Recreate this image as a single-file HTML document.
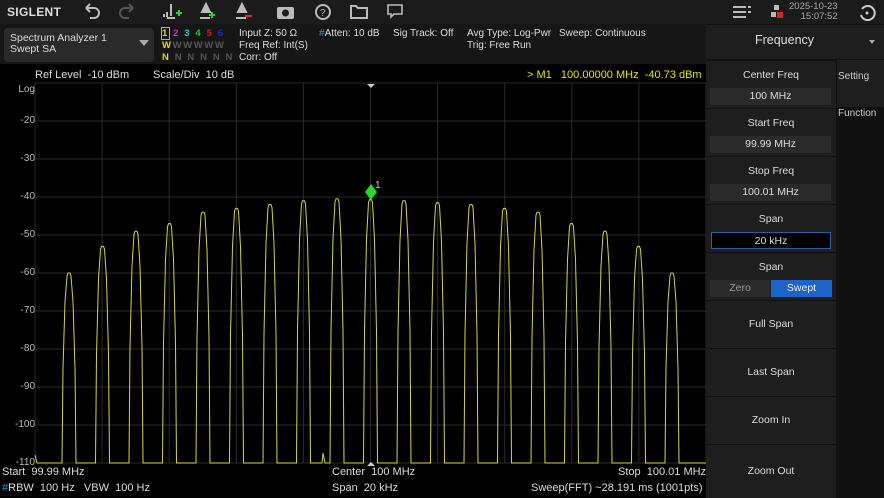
<!DOCTYPE html>
<html><head><meta charset="utf-8"><style>
*{margin:0;padding:0;box-sizing:border-box}
body{width:884px;height:498px;background:#000;font-family:"Liberation Sans",sans-serif;color:#ddd;position:relative;overflow:hidden;font-size:10px}
.a{position:absolute;white-space:nowrap}
.top{left:0;top:0;width:884px;height:24px;background:#1b1b1b}
.info{left:0;top:24px;width:706px;height:40px;background:#161616}
.rp{left:706px;top:24px;width:178px;height:474px;background:#111}
.btn{position:absolute;left:706px;width:130px;height:47px;background:#1e1e1e;text-align:center;color:#ddd;font-size:10.5px}
.val{position:absolute;left:4px;width:121px;height:17px;top:27px;background:#2a2a2a;line-height:17px}
.y{position:absolute;right:849px;color:#bbb;font-size:10px}
.yl{color:#e6e600}
.b{font-size:11px}
</style></head><body>
<div class="a top"></div>
<div class="a" style="left:7px;top:5px;font-weight:bold;font-size:12px;color:#ddd;letter-spacing:.3px">SIGLENT</div>
<svg class="a" style="left:80px;top:0" width="340" height="24" fill="none" stroke="#bbb" stroke-width="2">
<path d="M6 8 h8 a5 5 0 0 1 0 10 h-4 M6 8 l4-4 M6 8 l4 4"/>
<path d="M53 8 h-8 a5 5 0 0 0 0 10 h4 M53 8 l-4-4 M53 8 l-4 4" stroke="#555"/>
<path d="M91 4 v12 M87 18 h8 M84 17 v-3 M87 17 v-5" stroke="#bbb"/><path d="M96 13 h6 M99 10 v6" stroke="#3c3"/>
<path d="M126 4 l-4 8 h8 z M120 18 h10" fill="#bbb"/><path d="M129 15 h6 M132 12 v6" stroke="#3c3"/>
<path d="M162 4 l-4 8 h8 z M156 18 h10" fill="#bbb"/><path d="M165 16 h7" stroke="#d33"/>
<rect x="197" y="7" width="17" height="12" rx="2" fill="#bbb" stroke="none"/><circle cx="205.5" cy="13" r="3.5" fill="#1b1b1b" stroke="none"/>
<circle cx="243" cy="12" r="7"/><text x="240" y="16" fill="#bbb" stroke="none" font-size="10" font-family="Liberation Sans">?</text>
<path d="M271 6 h5 l2 2 h9 v10 h-16 z"/>
<path d="M308 5 h14 v9 h-8 l-3 3 v-3 h-3 z" stroke-width="1.6"/>
</svg>
<svg class="a" style="left:733px;top:5px" width="20" height="14" fill="#bbb"><rect x="0" y="1" width="13" height="2"/><rect x="0" y="6" width="13" height="2"/><rect x="0" y="11" width="13" height="2"/><rect x="15" y="1" width="3" height="2"/><rect x="15" y="6" width="3" height="2"/></svg>
<svg class="a" style="left:771px;top:5px" width="12" height="14"><rect x="3" y="0" width="5" height="5" fill="#bbb"/><rect x="0" y="7" width="5" height="5" fill="#bbb"/><rect x="6" y="7" width="6" height="6" fill="#d22"/></svg>
<div class="a" style="left:789px;top:2px;font-size:9.5px;color:#aaa;line-height:10px;text-align:right">2025-10-23<br>15:07:52</div>
<svg class="a" style="left:858px;top:4px" width="18" height="17" fill="none" stroke="#ccc" stroke-width="2"><path d="M4 5 a7 7 0 1 1 -1 6"/><circle cx="9" cy="9" r="1.5" fill="#ccc" stroke="none"/></svg>

<div class="a info"></div>
<div class="a" style="left:4px;top:28px;width:150px;height:34px;background:#2a2a2a;border-radius:4px"></div>
<div class="a" style="left:10px;top:33px;font-size:10.5px;line-height:11px;color:#ddd">Spectrum Analyzer 1<br>Swept SA</div>
<div class="a" style="left:139px;top:40px;width:0;height:0;border-left:5px solid transparent;border-right:5px solid transparent;border-top:6px solid #aaa"></div>
<div class="a" style="left:162px;top:28px;font-size:9.5px;line-height:12px;font-weight:bold;letter-spacing:1.6px">
<span style="color:#dd0;outline:1px solid #aaa">1</span> <span style="color:#c3c">2</span> <span style="color:#2cc">3</span> <span style="color:#2c2">4</span> <span style="color:#c22">5</span> <span style="color:#22d">6</span><br>
<span style="color:#dd0">W</span><span style="color:#555">WWWWW</span><br><span style="color:#dd0">N</span> <span style="color:#555">N N N N N</span></div>
<div class="a" style="left:239px;top:28px;font-size:10px;line-height:12px">Input Z: 50 Ω<br>Freq Ref: Int(S)<br>Corr: Off</div>
<div class="a" style="left:319px;top:28px;font-size:10px"><span style="color:#29c">#</span>Atten: 10 dB</div>
<div class="a" style="left:393px;top:28px;font-size:10px">Sig Track: Off</div>
<div class="a" style="left:467px;top:28px;font-size:10px;line-height:12px">Avg Type: Log-Pwr<br>Trig: Free Run</div>
<div class="a" style="left:559px;top:28px;font-size:10px">Sweep: Continuous</div>

<div class="a b" style="left:35px;top:69px">Ref Level &nbsp;-10 dBm</div>
<div class="a b" style="left:153px;top:69px">Scale/Div &nbsp;10 dB</div>
<div class="a yl b" style="left:527px;top:69px">&gt; M1 &nbsp;&nbsp;100.00000 MHz &nbsp;-40.73 dBm</div>

<div class="y" style="top:84px">Log</div>
<div class="y" style="top:115px">-20</div><div class="y" style="top:153px">-30</div><div class="y" style="top:191px">-40</div><div class="y" style="top:229px">-50</div><div class="y" style="top:267px">-60</div><div class="y" style="top:305px">-70</div><div class="y" style="top:343px">-80</div><div class="y" style="top:381px">-90</div><div class="y" style="top:419px">-100</div><div class="y" style="top:457px">-110</div>

<svg class="a" id="plot" style="left:0;top:0" width="706" height="498"></svg>

<div class="a b" style="left:2px;top:466px">Start &nbsp;99.99 MHz</div>
<div class="a b" style="left:332px;top:466px">Center &nbsp;100 MHz</div>
<div class="a b" style="left:618px;top:466px">Stop &nbsp;100.01 MHz</div>
<div class="a b" style="left:2px;top:482px"><span style="color:#29c">#</span>RBW &nbsp;100 Hz &nbsp;&nbsp;VBW &nbsp;100 Hz</div>
<div class="a b" style="left:332px;top:482px">Span &nbsp;20 kHz</div>
<div class="a b" style="left:531px;top:482px">Sweep(FFT) ~28.191 ms (1001pts)</div>

<div class="a rp"></div>
<div class="a" style="left:706px;top:25px;width:178px;height:34px;background:#1e1e1e"></div>
<div class="a" style="left:706px;top:33px;width:157px;text-align:center;font-size:12.5px;color:#ddd">Frequency</div>
<div class="a" style="left:869px;top:40px;border-left:3px solid transparent;border-right:3px solid transparent;border-top:4px solid #aaa"></div>
<div class="a" style="left:837px;top:60px;width:47px;height:47px;background:#1e1e1e"></div>
<div class="a" style="left:838px;top:71px;font-size:10px;color:#ccc">Setting</div>
<div class="a" style="left:838px;top:108px;font-size:10px;color:#ccc">Function</div>

<div class="btn" style="top:61px"><div style="margin-top:8px">Center Freq</div><div class="val">100 MHz</div></div>
<div class="btn" style="top:109px"><div style="margin-top:8px">Start Freq</div><div class="val">99.99 MHz</div></div>
<div class="btn" style="top:157px"><div style="margin-top:8px">Stop Freq</div><div class="val">100.01 MHz</div></div>
<div class="btn" style="top:205px"><div style="margin-top:8px">Span</div><div class="val" style="background:#000;border:1px solid #2a5fa8;left:5px;width:120px;top:27px">20 kHz</div></div>
<div class="btn" style="top:253px"><div style="margin-top:8px">Span</div><div class="val" style="width:60px;color:#999">Zero</div><div class="val" style="left:65px;width:61px;background:#1d64c8;color:#eee">Swept</div></div>
<div class="btn" style="top:301px;line-height:47px">Full Span</div>
<div class="btn" style="top:349px;line-height:47px">Last Span</div>
<div class="btn" style="top:397px;line-height:47px">Zoom In</div>
<div class="btn" style="top:445px;line-height:53px;height:53px">Zoom Out</div>

<script>
var s='';var L=35,R=706,T=83,B=463;
for(var i=0;i<=10;i++){var x=L+(R-L)*i/10;s+='<line x1="'+x+'" y1="'+T+'" x2="'+x+'" y2="'+B+'" stroke="#2a2a2a"/>';}
for(var j=0;j<=10;j++){var y=T+38*j;s+='<line x1="'+L+'" y1="'+y+'" x2="'+R+'" y2="'+y+'" stroke="#2a2a2a"/>';}
var lv=[-60,-53,-49,-47,-44,-43,-42,-41,-40.5,-40.7,-41,-41.5,-42,-43,-44,-47,-49,-53,-60];
var d='M'+L+' '+(B-8)+' L'+(L+2)+' '+B;
for(var k=0;k<19;k++){var cx=69+k*33.5;var yt=B-(lv[k]+110)*3.8;var h=B-yt;
d+=' L'+(cx-7)+' '+B+' L'+(cx-6)+' '+(B-h*0.5)+' L'+(cx-4)+' '+(B-h*0.85)+' L'+(cx-2)+' '+(yt+3)+' L'+(cx-1)+' '+yt+' L'+(cx+1)+' '+yt+' L'+(cx+2)+' '+(yt+3)+' L'+(cx+4)+' '+(B-h*0.85)+' L'+(cx+6)+' '+(B-h*0.5)+' L'+(cx+7)+' '+B;
if(k==7){d+=' L322 '+B+' L323 453 L325 '+B;}}
d+=' L'+R+' '+B;
s+='<path d="'+d+'" fill="none" stroke="#d6d640" stroke-width="1"/>';
s+='<path d="M367 84 h8 l-4 4z" fill="#ccc"/><path d="M367 466 h8 l-4 -4z" fill="#ccc"/>';
s+='<path d="M371 184 l6 8 l-6 8 l-6 -8z" fill="#22dd22"/><text x="375" y="188" fill="#ccc" font-size="10" font-family="Liberation Sans">1</text>';
document.getElementById('plot').innerHTML=s;
</script>
</body></html>
